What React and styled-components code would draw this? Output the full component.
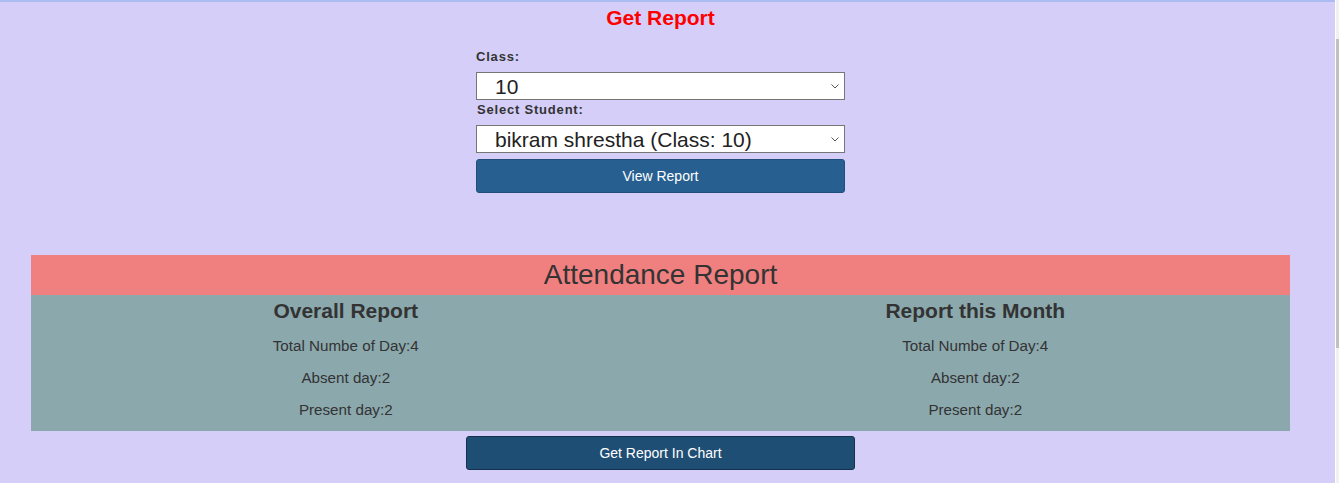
import React from 'react';
import styled, { createGlobalStyle } from 'styled-components';

const GlobalStyle = createGlobalStyle`
  html, body {
    margin: 0;
    padding: 0;
    background: #d4cef8;
    overflow: hidden;
  }
  body {
    border-top: 2px solid #abbcf3;
    font-family: "Liberation Sans", Arial, sans-serif;
    color: #333;
  }
`;

const Page = styled.div`
  width: 1321px;
  display: flex;
  flex-direction: column;
  align-items: center;
`;

const Title = styled.h2`
  margin: 4px 0 0;
  font-size: 21px;
  line-height: 24px;
  font-weight: 700;
  color: #ff0000;
`;

const Form = styled.form`
  width: 369px;
  margin-top: 19px;
  display: flex;
  flex-direction: column;
`;

const Label = styled.label`
  font-size: 13px;
  line-height: 16px;
  font-weight: 700;
  letter-spacing: 0.8px;
  color: #333;
  margin-bottom: 7px;
  padding-left: ${p => p.$indent || 0}px;
`;

const SelectWrap = styled.div`
  position: relative;
  margin-bottom: ${p => p.$gap}px;
`;

const Select = styled.select`
  display: block;
  width: 100%;
  height: 28px;
  box-sizing: border-box;
  border: 1px solid #767676;
  background: #fff;
  font-family: "Liberation Sans", Arial, sans-serif;
  font-size: 21px;
  color: #222;
  padding: 0 0 0 18px;
  border-radius: 0;
  appearance: none;
  -webkit-appearance: none;
  outline: none;
`;

const Chevron = styled.svg`
  position: absolute;
  right: 6px;
  top: 12px;
  width: 8px;
  height: 5px;
  pointer-events: none;
`;

const Button = styled.button`
  box-sizing: border-box;
  width: ${p => p.$width || '100%'};
  height: 34px;
  border-radius: 3px;
  border: 1px solid ${p => p.$border};
  background: ${p => p.$bg};
  color: #fff;
  font-family: "Liberation Sans", Arial, sans-serif;
  font-size: 14px;
  cursor: pointer;
`;

const Report = styled.section`
  width: 1259px;
  margin-top: 62px;
`;

const ReportHead = styled.div`
  height: 40px;
  background: #f08080;
  display: flex;
  align-items: center;
  justify-content: center;
  font-size: 28px;
  color: #333;
`;

const ReportBody = styled.div`
  background: #8ba8ad;
  display: grid;
  grid-template-columns: 1fr 1fr;
  padding: 4px 0 13px;
`;

const Column = styled.div`
  display: flex;
  flex-direction: column;
  align-items: center;
`;

const ColTitle = styled.h3`
  margin: 0 0 15px;
  font-size: 21px;
  line-height: 24px;
  font-weight: 700;
  color: #333;
`;

const Stat = styled.p`
  margin: 0 0 16px;
  font-size: 15.2px;
  line-height: 16px;
  color: #333;
  &:last-child { margin-bottom: 0; }
`;

const ChartRow = styled.div`
  margin-top: 5px;
`;

const Scrollbar = styled.div`
  position: fixed;
  top: 0;
  right: 0;
  width: 3px;
  height: 100%;
  background: #f1f1f1;
  border-left: 1px solid #fff;
`;

const Thumb = styled.div`
  margin-top: 39px;
  height: 309px;
  background: #c1c1c1;
`;

const stats = [
  { title: 'Overall Report', total: 4, absent: 2, present: 2 },
  { title: 'Report this Month', total: 4, absent: 2, present: 2 },
];

function Dropdown({ gap, value, label }) {
  return (
    <SelectWrap $gap={gap}>
      <Select defaultValue={value}>
        <option value={value}>{label}</option>
      </Select>
      <Chevron viewBox="0 0 8 5">
        <path d="M0.5 0.5 L4 4 L7.5 0.5" fill="none" stroke="#555" strokeWidth="1" />
      </Chevron>
    </SelectWrap>
  );
}

export default function App() {
  return (
    <>
      <GlobalStyle />
      <Page>
        <Title>Get Report</Title>
        <Form onSubmit={e => e.preventDefault()}>
          <Label>Class:</Label>
          <Dropdown gap={2} value="10" label="10" />
          <Label $indent={1}>Select Student:</Label>
          <Dropdown gap={6} value="bikram" label="bikram shrestha (Class: 10)" />
          <Button type="submit" $bg="#276090" $border="#1f4f7a">View Report</Button>
        </Form>

        <Report>
          <ReportHead>Attendance Report</ReportHead>
          <ReportBody>
            {stats.map(s => (
              <Column key={s.title}>
                <ColTitle>{s.title}</ColTitle>
                <Stat>Total Numbe of Day:{s.total}</Stat>
                <Stat>Absent day:{s.absent}</Stat>
                <Stat>Present day:{s.present}</Stat>
              </Column>
            ))}
          </ReportBody>
        </Report>

        <ChartRow>
          <Button type="button" $width="389px" $bg="#1f4e75" $border="#15324d">Get Report In Chart</Button>
        </ChartRow>
      </Page>
      <Scrollbar><Thumb /></Scrollbar>
    </>
  );
}
